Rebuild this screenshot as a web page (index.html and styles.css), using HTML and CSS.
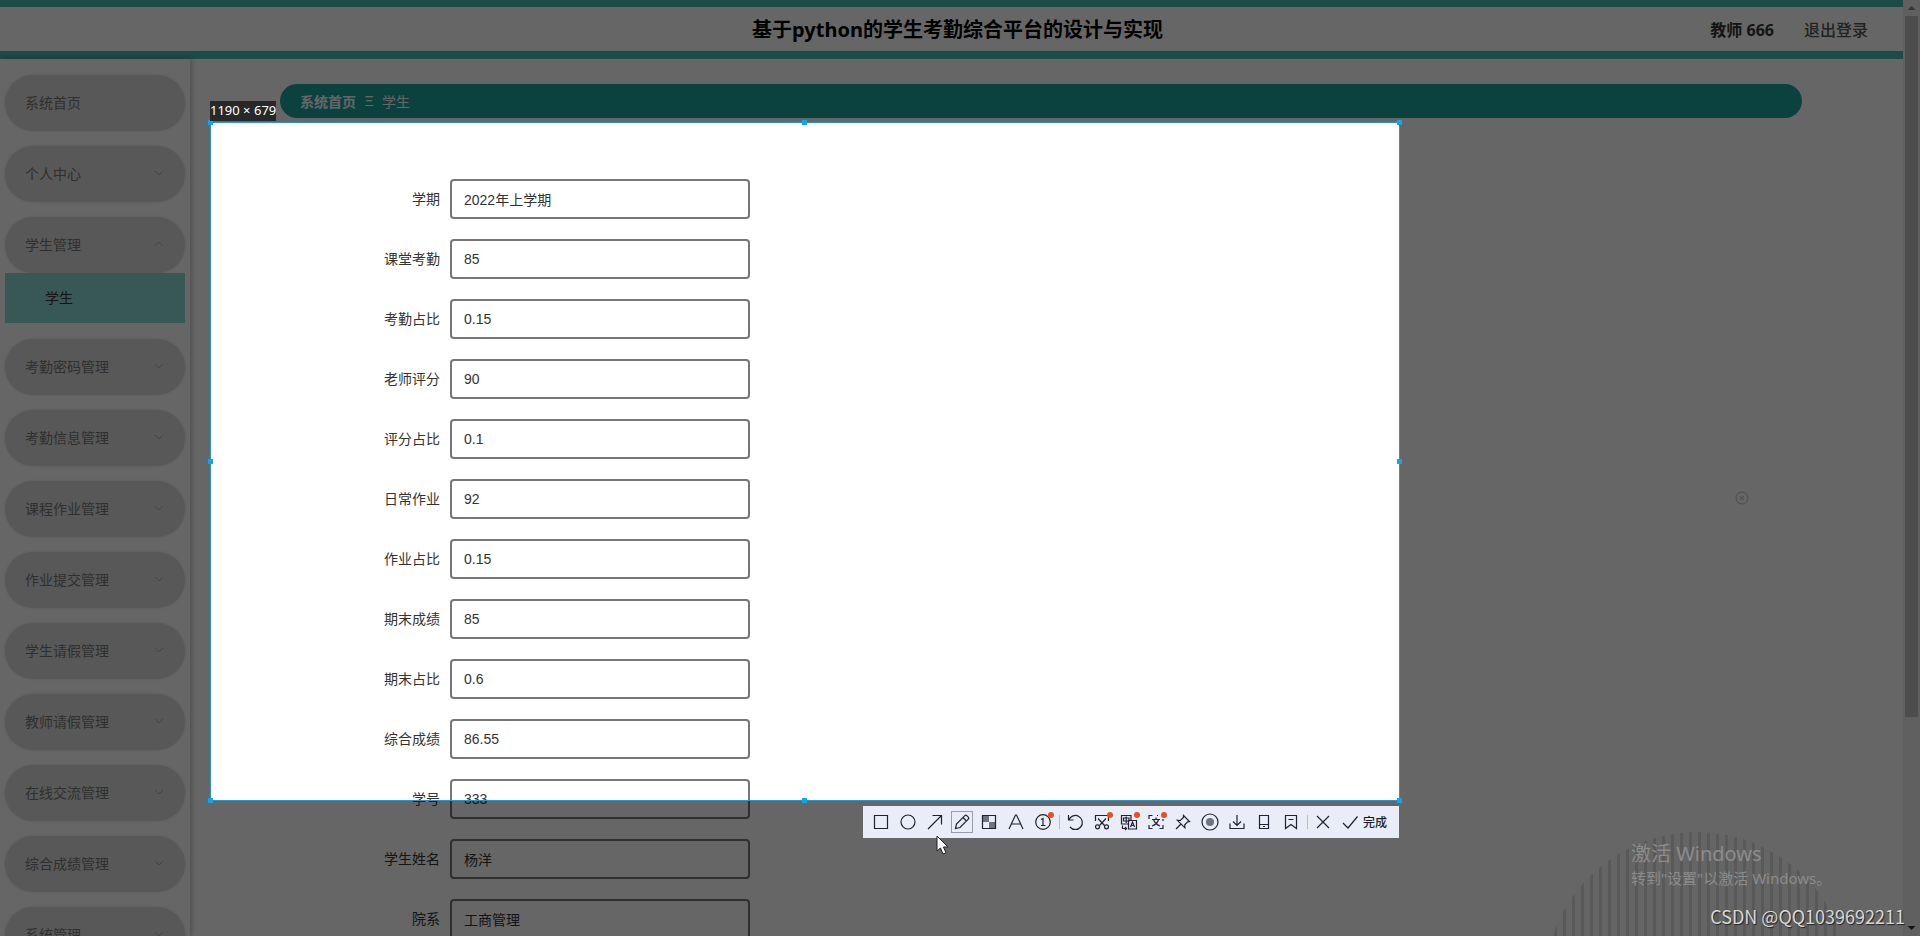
FILE: index.html
```html
<!DOCTYPE html>
<html lang="zh-CN">
<head>
<meta charset="utf-8">
<title>基于python的学生考勤综合平台的设计与实现</title>
<link rel="stylesheet" href="styles.css">
</head>
<body>
<svg class="defs" aria-hidden="true">
  <symbol id="down" viewBox="0 0 12 12"><path d="M2 4l4 4 4-4"/></symbol>
  <symbol id="up" viewBox="0 0 12 12"><path d="M2 8l4-4 4 4"/></symbol>
</svg>
<div class="window">
  <div class="page">
    <header class="header">
      <h1 class="title">基于python的学生考勤综合平台的设计与实现</h1>
      <div class="account"><span class="user">教师 666</span><a class="logout" href="#">退出登录</a></div>
    </header>
    <div class="body">
      <nav class="sidebar">
        <a class="item" href="#">系统首页</a>
        <a class="item" href="#">个人中心<svg class="chev"><use href="#down"/></svg></a>
        <div class="group">
          <a class="item" href="#">学生管理<svg class="chev"><use href="#up"/></svg></a>
          <a class="subitem" href="#">学生</a>
        </div>
        <a class="item" href="#">考勤密码管理<svg class="chev"><use href="#down"/></svg></a>
        <a class="item" href="#">考勤信息管理<svg class="chev"><use href="#down"/></svg></a>
        <a class="item" href="#">课程作业管理<svg class="chev"><use href="#down"/></svg></a>
        <a class="item" href="#">作业提交管理<svg class="chev"><use href="#down"/></svg></a>
        <a class="item" href="#">学生请假管理<svg class="chev"><use href="#down"/></svg></a>
        <a class="item" href="#">教师请假管理<svg class="chev"><use href="#down"/></svg></a>
        <a class="item" href="#">在线交流管理<svg class="chev"><use href="#down"/></svg></a>
        <a class="item" href="#">综合成绩管理<svg class="chev"><use href="#down"/></svg></a>
        <a class="item" href="#">系统管理<svg class="chev"><use href="#down"/></svg></a>
      </nav>
      <main class="main">
        <div class="crumbs"><a class="home" href="#">系统首页</a><span class="sep">Ξ</span><span>学生</span></div>
        <form class="form">
          <div class="row"><label for="f1">学期</label><input id="f1" type="text" value="2022年上学期"></div>
          <div class="row"><label for="f2">课堂考勤</label><input id="f2" type="text" value="85"></div>
          <div class="row"><label for="f3">考勤占比</label><input id="f3" type="text" value="0.15"></div>
          <div class="row"><label for="f4">老师评分</label><input id="f4" type="text" value="90"></div>
          <div class="row"><label for="f5">评分占比</label><input id="f5" type="text" value="0.1"></div>
          <div class="row"><label for="f6">日常作业</label><input id="f6" type="text" value="92"></div>
          <div class="row"><label for="f7">作业占比</label><input id="f7" type="text" value="0.15"></div>
          <div class="row"><label for="f8">期末成绩</label><input id="f8" type="text" value="85"></div>
          <div class="row"><label for="f9">期末占比</label><input id="f9" type="text" value="0.6"></div>
          <div class="row"><label for="f10">综合成绩</label><input id="f10" type="text" value="86.55"></div>
          <div class="row"><label for="f11">学号</label><input id="f11" type="text" value="333"></div>
          <div class="row"><label for="f12">学生姓名</label><input id="f12" type="text" value="杨洋"></div>
          <div class="row"><label for="f13">院系</label><input id="f13" type="text" value="工商管理"></div>
        </form>
      </main>
    </div>
  </div>
  <div class="scrollbar" aria-hidden="true">
    <svg class="arrow" viewBox="0 0 16 16"><path d="M4 10l4-4 4 4z"/></svg>
    <div class="track"><div class="thumb"></div></div>
    <svg class="arrow arrow-down" viewBox="0 0 16 16"><path d="M4 6l4 4 4-4z"/></svg>
  </div>

  <svg class="close-dot" viewBox="0 0 14 14" aria-hidden="true"><circle cx="7" cy="7" r="6"/><path d="M5 5l4 4M9 5l-4 4"/></svg>
  <div class="stripes" aria-hidden="true"></div>

  <section class="selection" aria-label="截图区域">
    <i class="handle n w"></i><i class="handle n c"></i><i class="handle n e"></i>
    <i class="handle m w"></i><i class="handle m e"></i>
    <i class="handle s w"></i><i class="handle s c"></i><i class="handle s e"></i>
    <div class="size">1190 × 679</div>
    <div class="toolbar" role="toolbar">
      <button type="button" aria-label="矩形"><svg viewBox="0 0 22 22"><path d="M4.500 4.500h13v13h-13z"/></svg></button>
      <button type="button" aria-label="椭圆"><svg viewBox="0 0 22 22"><circle cx="11" cy="11" r="7"/></svg></button>
      <button type="button" aria-label="箭头"><svg viewBox="0 0 22 22"><path d="M4 18L17.500 4.500M8.500 4.500h9v9"/></svg></button>
      <button type="button" class="on" aria-label="画笔"><svg viewBox="0 0 22 22"><path d="M4.500 17.500l1-4.500L13.800 4.700q1-1 2 0l1.500 1.500q1 1 0 2L9 16.500zM12 6.500l3.500 3.500"/></svg></button>
      <button type="button" aria-label="马赛克"><svg viewBox="0 0 22 22"><path class="shade" d="M4.500 4.500H11V11H4.500zM11 11h6.500v6.500H11z"/><path class="shade-light" d="M11 4.500h6.500V11H11z"/><path d="M4.500 4.500h13v13h-13z"/></svg></button>
      <button type="button" aria-label="文字"><svg viewBox="0 0 22 22"><path d="M4 18L10.500 4h1L18 18M6.500 13h9"/></svg></button>
      <button type="button" aria-label="序号"><svg viewBox="0 0 22 22"><circle cx="11" cy="11" r="7.300"/><path d="M9 8.500l2-1V14M9 14.500h4.500"/><circle class="new" cx="19" cy="4" r="3"/></svg></button>
      <span class="bar"></span>
      <button type="button" aria-label="撤销"><svg viewBox="0 0 22 22"><path d="M4.500 4v5h5M4.800 9A7 7 0 1 1 6 16"/></svg></button>
      <button type="button" aria-label="裁剪"><svg viewBox="0 0 22 22"><path d="M4.500 10V4.500h13V10M7 7.500l6.500 7M15 7.500l-6.500 7"/><circle cx="6.500" cy="15.800" r="2"/><circle cx="15.500" cy="15.800" r="2"/><circle class="new" cx="19" cy="4" r="3"/></svg></button>
      <button type="button" aria-label="翻译"><svg viewBox="0 0 22 22"><path d="M10 13H3.500V4.500H13V9M5.500 7h5.500v3H5.500zM8.200 5.500v6.500M10.500 9.500h8v8.500h-8zM12.500 16l2-5 2 5M13.200 14.500h2.600M4.500 14.500v3h4M7 16l1.500 1.500L7 19"/><circle class="new" cx="19" cy="4" r="3"/></svg></button>
      <button type="button" aria-label="文字识别"><svg viewBox="0 0 22 22"><path d="M4 8V4.500h3.500M4 14v3.500h3.500M18 14v3.500h-3.500M18 10v-2M13 4.500h-1M7 8.500h8M11 6.500v2M13.500 8.500q-1 4.500-6.500 6.500M8.500 8.500q1.500 4.500 6.500 6.500"/><circle class="new" cx="19" cy="4" r="3"/></svg></button>
      <button type="button" aria-label="钉住"><svg viewBox="0 0 22 22"><path d="M11.500 4.500l6 6-1.800.3-3 3 .2 3-7.500-7.500 3 .2 3-3zM9 13l-5 5"/></svg></button>
      <button type="button" aria-label="录制"><svg viewBox="0 0 22 22"><circle cx="11" cy="11" r="8"/><circle class="shade" cx="11" cy="11" r="4"/></svg></button>
      <button type="button" aria-label="保存"><svg viewBox="0 0 22 22"><path d="M11 4v10M7 10.500l4 4 4-4M4 12.500v5h14v-5"/></svg></button>
      <button type="button" aria-label="发送到手机"><svg viewBox="0 0 22 22"><path d="M6.500 4.500h9v13h-9zM6.500 13.500h9M10 15.500h2"/></svg></button>
      <button type="button" aria-label="收藏"><svg viewBox="0 0 22 22"><path d="M5.500 4.500h11v13L11 13.500l-5.500 4zM8.500 8.500h5"/></svg></button>
      <span class="bar"></span>
      <button type="button" aria-label="取消"><svg viewBox="0 0 22 22"><path d="M5 5l12 12M17 5L5 17"/></svg></button>
      <button type="button" class="done"><svg viewBox="0 0 22 22"><path d="M4 12l5 5L18.500 5.500"/></svg>完成</button>
    </div>
  </section>

  <svg class="cursor" viewBox="0 0 13 20" aria-hidden="true"><path d="M1 1v15l3.500-3 2.500 6 3-1.200-2.600-5.800H12z"/></svg>
  <div class="activate"><p class="activate-title">激活 Windows</p><p class="activate-note">转到"设置"以激活 Windows。</p></div>
  <div class="credit">CSDN @QQ1039692211</div>
</div>
</body>
</html>
```
FILE: styles.css
```css
* { box-sizing: border-box; }
body {
  margin: 0;
  font-family: "Liberation Sans", "Noto Sans CJK SC", sans-serif;
  font-size: 14px;
  color: #333;
  background: #fff;
}
a { color: inherit; text-decoration: none; }
.defs { display: none; }

.window { position: relative; display: flex; height: 100vh; overflow: hidden; }
.page { flex: 1; min-width: 0; display: flex; flex-direction: column; }

.header {
  display: grid;
  grid-template-columns: 1fr auto 1fr;
  align-items: center;
  flex: none;
  height: 59px;
  padding: 2px 35px 0 47px;
  border-top: 7px solid #46beaf;
  border-bottom: 8px solid #46beaf;
  font-family: "Noto Sans", "Noto Sans CJK SC", sans-serif;
}
.title { grid-column: 2; margin: 0; font-size: 20px; line-height: 28px; font-weight: 700; color: #000; }
.account { display: flex; justify-content: flex-end; gap: 30px; font-size: 16px; line-height: 24px; }
.user { font-weight: 700; color: #333; }
.logout { font-weight: 500; color: #555; }

.body { flex: 1; min-height: 0; display: flex; }
.sidebar {
  flex: none;
  width: 190px;
  padding: 16px 5px 0;
  display: flex;
  flex-direction: column;
  gap: 15px;
  overflow: hidden;
  position: relative;
  box-shadow: 1px 0 6px rgba(0, 0, 0, .3);
}
.item {
  flex: none;
  display: flex;
  align-items: center;
  justify-content: space-between;
  height: 56px;
  padding: 0 20px 2px;
  border-radius: 28px;
  background: #dcdcdc;
  box-shadow: 0 0 3px #dcdcdc;
  color: #777;
}
.chev { width: 12px; height: 12px; fill: none; stroke: #aaa; }
.group { flex: none; padding-bottom: 1px; }
.subitem {
  display: flex;
  align-items: center;
  height: 50px;
  padding: 0 0 2px 40px;
  background: #8cdcd7;
  color: #333;
}

.main { flex: 1; min-width: 0; padding: 25px 101px 0 90px; overflow: hidden; }
.crumbs {
  display: flex;
  align-items: center;
  gap: 8px;
  height: 34px;
  padding: 0 20px;
  border-radius: 17px;
  background: #1ca5a0;
  color: #fff;
}
.home { font-weight: 700; }
.sep { width: 10px; text-align: center; }

.form { display: flex; flex-direction: column; gap: 20px; padding-top: 61px; }
.row { display: flex; align-items: center; }
.row label { width: 170px; padding: 0 10px 2px 0; text-align: right; }
.row input {
  width: 300px;
  height: 40px;
  padding: 0 12px;
  border: 2px solid #767676;
  border-radius: 4px;
  background: #fff;
  font: inherit;
  color: #333;
}

.scrollbar { flex: none; width: 17px; display: flex; flex-direction: column; align-items: stretch; background: #f1f1f1; }
.arrow { width: 17px; height: 16px; fill: #888; }
.arrow-down { fill: #333; }
.track { flex: 1; padding: 0 2px; }
.thumb { height: 77.5%; background: #c1c1c1; }

.close-dot { position: absolute; left: 1735px; top: 491px; width: 14px; height: 14px; fill: none; stroke: #bbb; }
.stripes {
  position: absolute;
  left: 1545px;
  top: 832px;
  width: 304px;
  height: 104px;
  background: repeating-linear-gradient(90deg, #dedede 0 3px, #fcfcfc 3px 9px);
  clip-path: circle(152px at 152px 152px);
}

.selection {
  position: absolute;
  left: 210px;
  top: 122px;
  width: 1190px;
  height: 679px;
  border: 1px solid #2a94cc;
  box-shadow: 0 0 0 2000px rgba(0, 0, 0, .6);
}
.handle { position: absolute; width: 5px; height: 5px; background: #12a5ee; }
.n { top: -3px; }
.m { top: calc(50% - 3px); }
.s { bottom: -3px; }
.w { left: -3px; }
.c { left: calc(50% - 3px); }
.e { right: -3px; }
.size {
  position: absolute;
  left: -1px;
  bottom: calc(100% + 2px);
  width: 66px;
  padding-bottom: 2px;
  background: #282828;
  color: #fff;
  font: 13px/18px "Noto Sans", sans-serif;
  text-align: center;
  white-space: nowrap;
}
.toolbar {
  position: absolute;
  right: 0;
  top: calc(100% + 6px);
  display: flex;
  align-items: center;
  height: 32px;
  padding: 0 12px 0 5px;
  background: #e9edf7;
}
.toolbar button {
  display: flex;
  align-items: center;
  justify-content: center;
  width: 27px;
  height: 22px;
  padding: 0;
  border: 0;
  background: none;
  color: #1a1d29;
}
.toolbar svg { flex: none; width: 22px; height: 22px; fill: none; stroke: #1f2233; stroke-width: 1.2; overflow: visible; }
.toolbar .on svg { outline: 1px solid #9a9da8; outline-offset: -1px; }
.toolbar .done { width: auto; padding-left: 2px; gap: 2px; font: 500 12px/20px "Noto Sans CJK SC", sans-serif; white-space: nowrap; }
.toolbar .shade { fill: #6f7280; stroke: none; }
.toolbar .shade-light { fill: #e9edf7; stroke: none; }
.toolbar .new { fill: #e8501e; stroke: none; }
.bar { width: 1px; height: 14px; margin: 0 2px; background: #b9bdc9; }

.cursor { position: absolute; left: 936px; top: 835px; width: 13px; height: 20px; fill: #fff; stroke: #222; }
.activate {
  position: absolute;
  left: 1631px;
  top: 839px;
  font-family: "Noto Sans", "Noto Sans CJK SC", sans-serif;
  color: #8c8c8c;
}
.activate p { margin: 0; white-space: nowrap; }
.activate-title { font-size: 20px; line-height: 30px; }
.activate-note { font-size: 15px; line-height: 18px; }
.credit {
  position: absolute;
  right: 15px;
  bottom: 7px;
  font: 18px/26px "Noto Sans CJK SC", sans-serif;
  color: #d8d8d8;
  text-shadow: 1px 1px 1px #222;
  white-space: nowrap;
}
```
